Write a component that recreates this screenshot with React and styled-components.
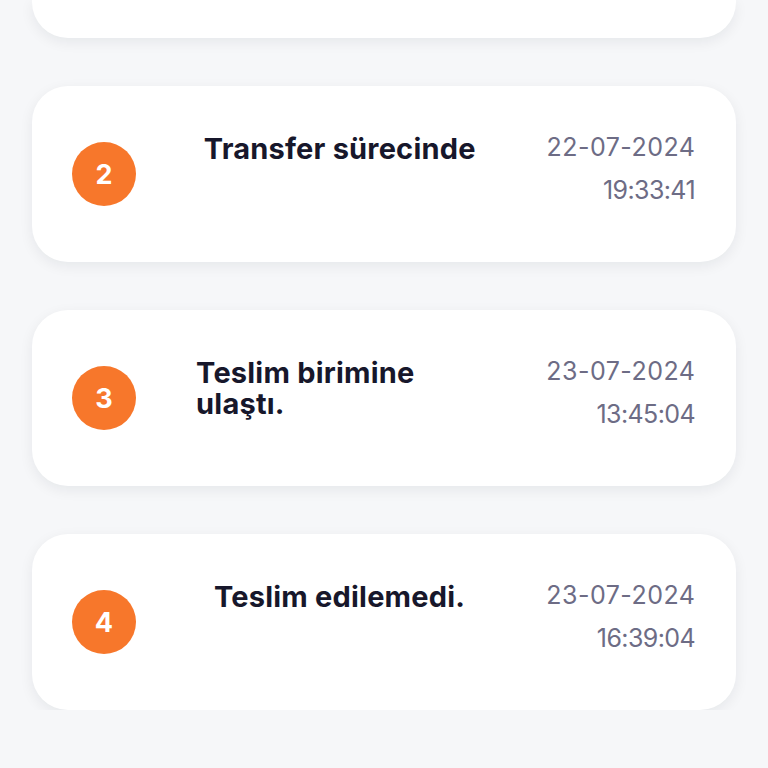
import React from "react";
import styled, { createGlobalStyle } from "styled-components";

const Global = createGlobalStyle`
  body {
    margin: 0;
    background: #f6f7f9;
    font-family: "Inter", "Noto Sans", sans-serif;
    overflow: hidden;
  }
`;

const List = styled.div`
  display: flex;
  flex-direction: column;
  gap: 48px;
  padding: 0 32px;
`;

const Card = styled.div`
  background: #ffffff;
  border-radius: 36px;
  height: 176px;
  box-sizing: border-box;
  padding: 0 41px 0 40px;
  display: flex;
  align-items: flex-start;
  box-shadow: 0 4px 14px rgba(20, 24, 40, 0.07);
`;

// the previous step, scrolled mostly out of view
const PeekCard = styled(Card)`
  height: 38px;
  border-radius: 0 0 36px 36px;
`;

const Step = styled.div`
  align-self: center;
  flex: none;
  width: 64px;
  height: 64px;
  border-radius: 50%;
  background: #f7772b;
  color: #ffffff;
  display: flex;
  align-items: center;
  justify-content: center;
  font-size: 27px;
  font-weight: 700;
`;

const TitleArea = styled.div`
  flex: 1;
  display: flex;
  justify-content: center;
  padding: 47px 27px 0 24px;
`;

const Title = styled.div`
  max-width: 287px;
  font-size: 29px;
  line-height: 31px;
  letter-spacing: 0.2px;
  font-weight: 700;
  color: #17172b;
  text-align: left;
`;

const Stamp = styled.div`
  flex: none;
  padding-top: 46px;
  display: flex;
  flex-direction: column;
  align-items: flex-end;
  gap: 13px;
  color: #6d6c85;
  font-size: 25px;
  line-height: 30px;
  font-weight: 400;
`;

const StampLine = styled.span`
  letter-spacing: ${props => (props.time ? "-0.6px" : "0.5px")};
  margin-right: ${props => (props.time ? "0" : "-0.5px")};
`;

const steps = [
  { n: 2, title: "Transfer sürecinde", date: "22-07-2024", time: "19:33:41" },
  { n: 3, title: "Teslim birimine ulaştı.", date: "23-07-2024", time: "13:45:04" },
  { n: 4, title: "Teslim edilemedi.", date: "23-07-2024", time: "16:39:04" }
];

export default function App() {
  return (
    <>
      <Global />
      <List>
        <PeekCard />
        {steps.map(s => (
          <Card key={s.n}>
            <Step>{s.n}</Step>
            <TitleArea>
              <Title>{s.title}</Title>
            </TitleArea>
            <Stamp>
              <StampLine>{s.date}</StampLine>
              <StampLine time>{s.time}</StampLine>
            </Stamp>
          </Card>
        ))}
      </List>
    </>
  );
}
